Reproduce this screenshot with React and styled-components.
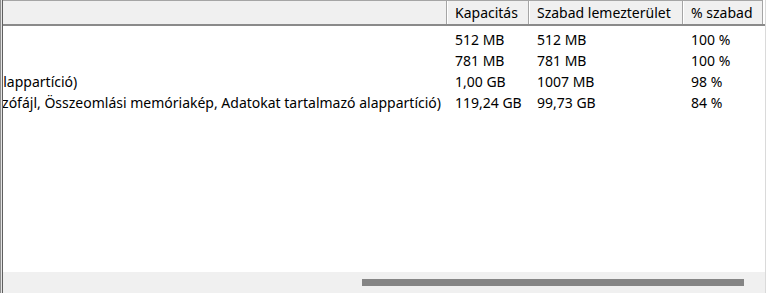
import React from 'react'
import styled, { createGlobalStyle } from 'styled-components'

// how far the list is scrolled to the right
const SCROLL = 243

const columns = [
    { key: 'status', label: 'Állapot', width: 444 + SCROLL },
    { key: 'cap', label: 'Kapacitás', width: 82 },
    { key: 'free', label: 'Szabad lemezterület', width: 154 },
    { key: 'pct', label: '% szabad', width: 80 },
]

const rows = [
    { status: 'Kifogástalan (EFI rendszerpartíció)', cap: '512 MB', free: '512 MB', pct: '100 %' },
    { status: 'Kifogástalan (Helyreállító partíció)', cap: '781 MB', free: '781 MB', pct: '100 %' },
    { status: 'Kifogástalan (Adatokat tartalmazó alappartíció)', cap: '1,00 GB', free: '1007 MB', pct: '98 %' },
    { status: 'Kifogástalan (Rendszerindítás, Lapozófájl, Összeomlási memóriakép, Adatokat tartalmazó alappartíció)', cap: '119,24 GB', free: '99,73 GB', pct: '84 %' },
]

const template = columns.map(c => c.width + 'px').join(' ')

const GlobalStyle = createGlobalStyle`
    html, body {
        margin: 0;
        padding: 0;
        background: #ffffff;
        overflow: hidden;
    }
    body {
        font-family: "Noto Sans", "Open Sans", sans-serif;
        font-size: 14px;
        color: #000000;
    }
`

function App() {
    return (
        <>
            <GlobalStyle />
            <Window>
                <Viewport>
                    <Table>
                        <HeaderRow $template={template}>
                            {columns.map(c => (
                                <HeaderCell key={c.key}>{c.label}</HeaderCell>
                            ))}
                        </HeaderRow>
                        {rows.map((r, i) => (
                            <Row key={i} $template={template}>
                                {columns.map(c => (
                                    <Cell key={c.key}>{r[c.key]}</Cell>
                                ))}
                            </Row>
                        ))}
                    </Table>
                </Viewport>
                <ScrollTrack>
                    <Thumb />
                </ScrollTrack>
            </Window>
        </>
    )
}

const Window = styled.div`
    width: 766px;
    height: 293px;
    border-right: 1px solid #dadada;
    display: flex;
    flex-direction: column;
    box-shadow: inset 1px 0 #8f8f8f, inset 2px 0 #e4e4e4, inset 3px 0 #5f5f5f;
    padding-left: 3px;
    box-sizing: border-box;
`

const Viewport = styled.div`
    flex: 1;
    overflow: hidden;
    background: #ffffff;
`

const Table = styled.div`
    margin-left: -${SCROLL}px;
    display: flex;
    flex-direction: column;
`

const HeaderRow = styled.div`
    display: grid;
    grid-template-columns: ${p => p.$template};
    height: 26px;
    box-sizing: border-box;
    border-bottom: 2px solid #8a8a8a;
    margin-bottom: 3px;
`

const HeaderCell = styled.div`
    background: #f0f0f0;
    border-top: 1px solid #a5a5a5;
    border-right: 1px solid #a5a5a5;
    box-shadow: inset 1px 0 #ffffff;
    padding: 0 0 0 8px;
    display: flex;
    align-items: center;
    white-space: nowrap;
    overflow: hidden;
    color: #000;
`

const Row = styled.div`
    display: grid;
    grid-template-columns: ${p => p.$template};
    height: 21px;
    align-items: center;
`

const Cell = styled.div`
    padding-left: 8px;
    white-space: nowrap;
    overflow: hidden;
`

const ScrollTrack = styled.div`
    height: 21px;
    background: #f0f0f0;
    display: flex;
    align-items: center;
    padding-left: 359px;
`

const Thumb = styled.div`
    width: 382px;
    height: 7px;
    background: #858585;
`

export default App
